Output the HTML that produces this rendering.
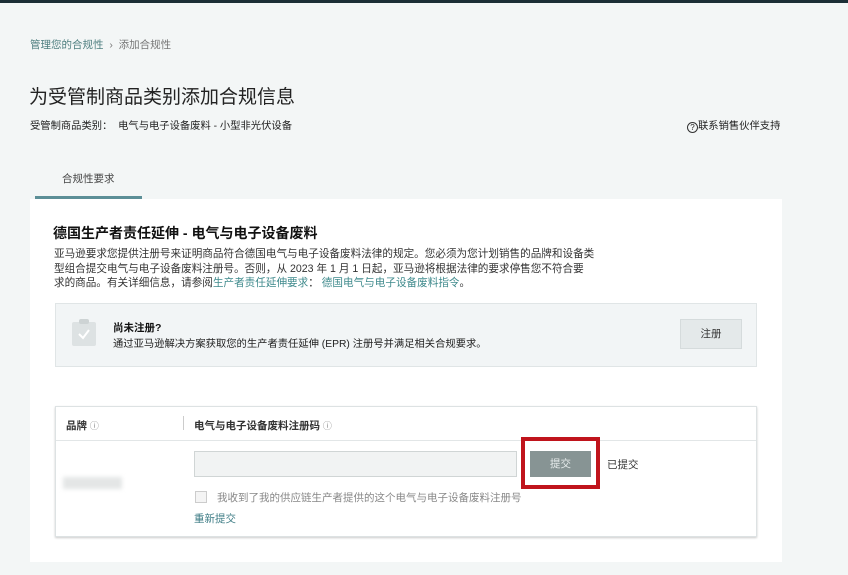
<!DOCTYPE html>
<html><head><meta charset="utf-8"><style>
*{margin:0;padding:0;box-sizing:border-box}
body{width:848px;height:575px;background:#f3f6f6;font-family:"Liberation Sans","Noto Sans CJK SC",sans-serif;color:#111;position:relative;overflow:hidden;font-size:10.5px}
.a{position:absolute;white-space:nowrap}
</style></head><body>
<div class="a" style="left:0;top:0;width:848px;height:3px;background:#1b2e36"></div>
<div class="a" style="left:30px;top:37px;color:#4f7f80;font-size:10.5px">管理您的合规性 <span style="color:#777">&nbsp;›&nbsp; 添加合规性</span></div>
<div class="a" style="left:29px;top:82px;font-size:19px;color:#222">为受管制商品类别添加合规信息</div>
<div class="a" style="left:30px;top:117px;font-size:10.3px;color:#222">受管制商品类别： &nbsp;电气与电子设备废料 - 小型非光伏设备</div>
<div class="a" style="left:687px;top:117px;font-size:10.3px;color:#222"><span style="display:inline-block;width:11px;height:11px;border:1.2px solid #333;border-radius:50%;font-size:8px;line-height:9px;text-align:center;vertical-align:-1px">?</span>联系销售伙伴支持</div>
<div class="a" style="left:62px;top:171px;font-size:10.5px;color:#444">合规性要求</div>
<div class="a" style="left:35px;top:196px;width:107px;height:3px;background:#5c8f97"></div>
<div class="a" style="left:30px;top:199px;width:752px;height:363px;background:#fff"></div>
<div class="a" style="left:53px;top:223px;font-size:14px;font-weight:bold;color:#111">德国生产者责任延伸 - 电气与电子设备废料</div>
<div class="a" style="left:54px;top:247px;font-size:10.6px;line-height:14.5px;color:#333">亚马逊要求您提供注册号来证明商品符合德国电气与电子设备废料法律的规定。您必须为您计划销售的品牌和设备类<br>型组合提交电气与电子设备废料注册号。否则，从 2023 年 1 月 1 日起，亚马逊将根据法律的要求停售您不符合要<br>求的商品。有关详细信息，请参阅<span style="color:#3f8a8c">生产者责任延伸要求</span>： <span style="color:#3f8a8c">德国电气与电子设备废料指令</span>。</div>
<div class="a" style="left:55px;top:303px;width:702px;height:64px;background:#f2f5f6;border:1px solid #e0e5e6"></div>
<div class="a" style="left:72px;top:322px;width:24px;height:24px;background:#dde2e3;border-radius:2px"></div>
<div class="a" style="left:79px;top:319px;width:10px;height:5px;background:#cdd3d4;border-radius:2px"></div>
<svg class="a" style="left:76px;top:327px" width="16" height="14"><path d="M3 7l4 4 6-8" stroke="#fff" stroke-width="2" fill="none"/></svg>
<div class="a" style="left:113px;top:320px;font-size:10.5px;font-weight:bold;color:#111">尚未注册?</div>
<div class="a" style="left:113px;top:335px;font-size:10.3px;color:#222">通过亚马逊解决方案获取您的生产者责任延伸 (EPR) 注册号并满足相关合规要求。</div>
<div class="a" style="left:680px;top:319px;width:62px;height:30px;background:#e4e9ea;border:1px solid #d5dbdc;font-size:10.5px;color:#333;text-align:center;line-height:28px">注册</div>
<div class="a" style="left:55px;top:406px;width:702px;height:131px;border:1px solid #dde2e3;box-shadow:0 1px 2px #ccc"></div>
<div class="a" style="left:56px;top:440px;width:700px;height:1px;background:#e2e6e7"></div>
<div class="a" style="left:183px;top:416px;width:1px;height:14px;background:#ccc"></div>
<div class="a" style="left:66px;top:418px;font-size:10.5px;font-weight:bold;color:#333">品牌 <span style="font-weight:normal;color:#888;font-size:9px">ⓘ</span></div>
<div class="a" style="left:194px;top:418px;font-size:10.5px;font-weight:bold;color:#333">电气与电子设备废料注册码 <span style="font-weight:normal;color:#888;font-size:9px">ⓘ</span></div>
<div class="a" style="left:63px;top:477px;width:59px;height:12px;background:#e4e6e6;filter:blur(2px)"></div>
<div class="a" style="left:194px;top:451px;width:323px;height:26px;background:#f1f3f3;border:1px solid #d0d5d5"></div>
<div class="a" style="left:521px;top:437px;width:79px;height:52px;border:4px solid #c0141c"></div>
<div class="a" style="left:530px;top:451px;width:61px;height:26px;background:#879494;color:#e8eded;font-size:10.5px;text-align:center;line-height:26px">提交</div>
<div class="a" style="left:607px;top:457px;font-size:10.5px;color:#333">已提交</div>
<div class="a" style="left:195px;top:491px;width:12px;height:12px;border:1px solid #ccc;background:#f4f4f4"></div>
<div class="a" style="left:217px;top:490px;font-size:10.5px;color:#888">我收到了我的供应链生产者提供的这个电气与电子设备废料注册号</div>
<div class="a" style="left:194px;top:511px;font-size:10.5px;color:#3f7d86">重新提交</div>
</body></html>
